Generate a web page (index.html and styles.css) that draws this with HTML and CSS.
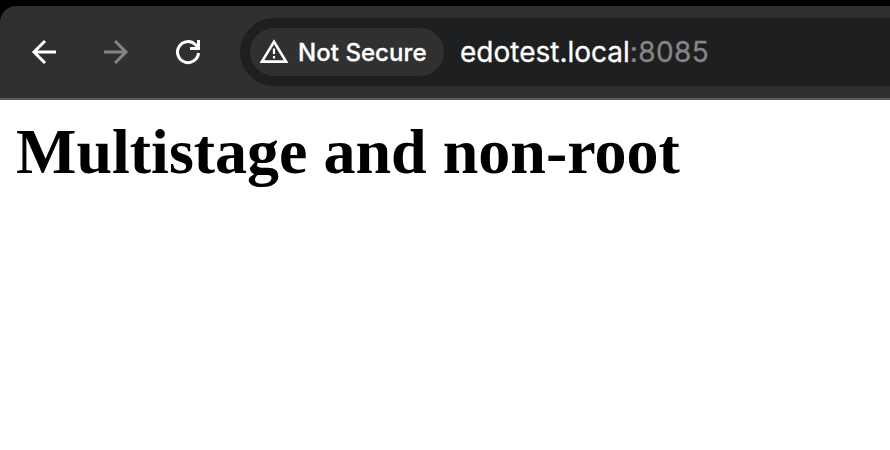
FILE: index.html
```html
<!DOCTYPE html>
<html lang="en">
<head>
<meta charset="utf-8">
<title>edotest.local</title>
<link rel="stylesheet" href="styles.css">
</head>
<body>
<header class="toolbar">
  <nav class="nav">
    <svg class="icon" viewBox="0 0 32 32"><path d="M28 16H6M17 5L6 16 17 27"/></svg>
    <svg class="icon dim" viewBox="0 0 32 32"><path d="M4 16h22M15 5L26 16 15 27"/></svg>
    <svg class="icon" viewBox="0 0 32 32"><path d="M26.500 17A10.500 10.500 0 1 1 23.300 8.500L26.400 12M26.500 4v8.500H18"/></svg>
  </nav>
  <div class="omnibox">
    <div class="chip">
      <svg class="warn" viewBox="0 0 30 26"><path class="tri" d="M15 2.800L27.100 22.600H2.900Z"/><path class="mark" d="M15 9.500v5.500M15 17v2.500"/></svg>
      <span class="chip-text">Not Secure</span>
    </div>
    <div class="url"><span class="host">edotest.local</span><span class="port">:8085</span></div>
  </div>
</header>
<main class="page"><h1 class="title">Multistage and non-root</h1></main>
</body>
</html>
```
FILE: styles.css
```css
* { box-sizing: border-box; }
body { margin: 0; padding-top: 6px; height: 450px; overflow: hidden; background: linear-gradient(#000 40px, #fff 40px); }
.toolbar { display: flex; height: 94px; padding: 12px 0 0 28px; background: #303030; border-bottom: 2px solid #5c595c; border-top-left-radius: 16px; font-family: Inter, sans-serif; }
.nav { display: flex; align-items: center; gap: 40px; width: 212px; height: 68px; }
.icon { width: 32px; height: 32px; fill: none; stroke: #fff; stroke-width: 3; }
.dim { stroke: #858585; }
.omnibox { display: flex; align-items: center; flex: 1; height: 68px; padding-left: 10px; background: #1e1f21; border-radius: 34px 0 0 34px; }
.chip { display: flex; align-items: center; width: 194px; height: 48px; padding-left: 9px; gap: 9px; border-radius: 24px; background: #303030; color: #fff; }
.warn { width: 30px; height: 26px; fill: none; stroke: #fff; stroke-width: 2.6; }
.mark { stroke-width: 2.2; }
.chip-text { font-size: 24px; font-weight: 500; white-space: nowrap; letter-spacing: 0.05px; -webkit-text-stroke: 0.3px; }
.url { margin-left: 16px; font-size: 28px; white-space: nowrap; color: #fff; -webkit-text-stroke: 0.3px; }
.port { color: #858585; letter-spacing: 0.4px; }
.page { padding: 15px 16px; }
.title { margin: 0; font: bold 64px/74px "Liberation Serif", serif; color: #000; white-space: nowrap; }
```
